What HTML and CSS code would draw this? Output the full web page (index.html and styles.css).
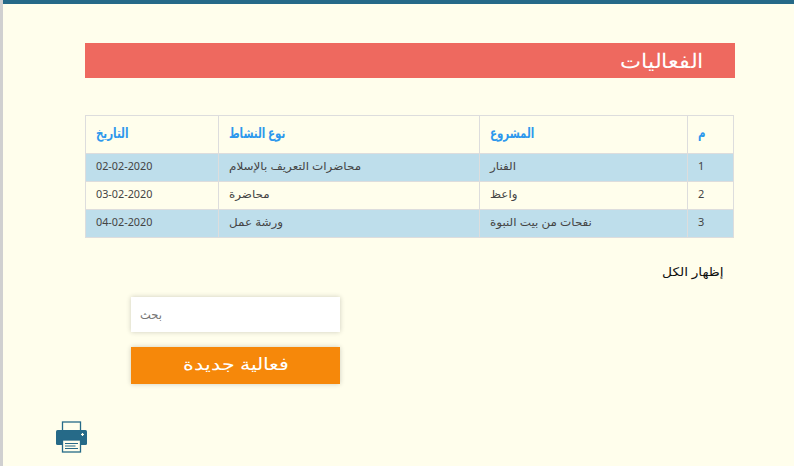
FILE: index.html
```html
<!DOCTYPE html>
<html lang="ar" dir="rtl">
<head>
<meta charset="utf-8">
<title>الفعاليات</title>
<link rel="stylesheet" href="styles.css">
</head>
<body>
<main class="page">
  <h1 class="title"><span>الفعاليات</span></h1>
  <table class="events">
    <colgroup><col class="c-num"><col class="c-project"><col class="c-type"><col class="c-date"></colgroup>
    <thead>
      <tr><th><span>م</span></th><th><span>المشروع</span></th><th><span>نوع النشاط</span></th><th><span>التاريخ</span></th></tr>
    </thead>
    <tbody>
      <tr><td>1</td><td><span>الفنار</span></td><td><span>محاضرات التعريف بالإسلام</span></td><td class="date" dir="ltr">02-02-2020</td></tr>
      <tr><td>2</td><td><span>واعظ</span></td><td><span>محاضرة</span></td><td class="date" dir="ltr">03-02-2020</td></tr>
      <tr><td>3</td><td><span>نفحات من بيت النبوة</span></td><td><span>ورشة عمل</span></td><td class="date" dir="ltr">04-02-2020</td></tr>
    </tbody>
  </table>
  <a class="show-all"><span>إظهار الكل</span></a>
  <div class="actions">
    <input class="search" type="text" placeholder="بحث">
    <button class="new-event"><span>فعالية جديدة</span></button>
  </div>
  <svg class="printer" width="32" height="32" viewBox="0 0 32 32">
    <rect x="6.500" y="1" width="18" height="12" fill="#fffeec" stroke="#266a88" stroke-width="1.300"/>
    <path d="M1.500 9h28q1.500 0 1.500 1.500v12q0 1.500-1.500 1.500h-28Q0 24 0 22.500v-12Q0 9 1.500 9z" fill="#266a88"/>
    <rect x="6.500" y="19" width="18" height="12" fill="#fffeec" stroke="#266a88" stroke-width="1.300"/>
    <path d="M9 22.500h13M9 25h10.500M9 27.500h13" stroke="#266a88" stroke-width="1.100"/>
    <path d="M26.500 12v3M25 13.500h3" stroke="#fffeec" stroke-width="1.200"/>
  </svg>
</main>
</body>
</html>
```
FILE: styles.css
```css
* { box-sizing: border-box; }
html, body { height: 100%; }
body {
  margin: 0;
  overflow: hidden;
  background: #fffeec;
  font-family: "Noto Sans", "DejaVu Sans", sans-serif;
}
.page {
  display: flex;
  flex-direction: column;
  height: 466px;
  padding: 39px 59px 0 82px;
  border-top: 4px solid #266a88;
  margin-left: 3px;
  box-shadow: -3px 0 0 #d0d0d0;
}
.title {
  width: 650px;
  height: 35px;
  margin: 0;
  padding-right: 31px;
  background: #ee695f;
  color: #fff;
  font-size: 20px;
  font-weight: 300;
  line-height: 35px;
}
.title span, .show-all span, .new-event span, .events span { display: inline-block; }
.title span { transform: scaleX(1.12); transform-origin: right; }
.events {
  width: 649px;
  margin: 37px 1px 0 0;
  border-collapse: collapse;
  table-layout: fixed;
  font-size: 11px;
  color: #444;
}
.c-num { width: 46px; }
.c-project { width: 208px; }
.c-type { width: 261px; }
.c-date { width: 133px; }
.events th, .events td {
  height: 28px;
  padding: 0 10px 4px;
  border: 1px solid #ddd;
  text-align: left;
  line-height: 16px;
  white-space: nowrap;
}
.events td span { transform: scaleX(1.085); transform-origin: left; }
.events .date { font-size: 10.800px; }
.events th {
  height: 38px;
  color: #2d98ed;
  font-size: 14px;
}
.events th span { transform: scaleX(.73); transform-origin: left; }
.events tbody tr:nth-child(odd) { background: #bedeeb; }
.show-all {
  margin: 24px 11px 0 0;
  height: 20px;
  line-height: 20px;
  font-size: 12px;
  color: #111;
}
.show-all span { transform: scaleX(1.15); transform-origin: right; }
.actions {
  display: flex;
  flex-direction: column;
  gap: 15px;
  align-self: flex-end;
  width: 209px;
  margin: 15px 0 0 46px;
}
.search, .new-event {
  width: 100%;
  border: 0;
  border-radius: 0;
  box-shadow: 0 0 5px rgba(0, 0, 0, .2);
  font-family: inherit;
}
.search {
  height: 35px;
  padding: 0 9px;
  background: #fff;
  font-size: 11.500px;
  text-align: left;
}
.search::placeholder { color: #757575; }
.new-event {
  height: 37px;
  padding: 0 0 5px;
  background: #f6880a;
  color: #fff;
  font-size: 17px;
  font-weight: 300;
}
.new-event span { transform: scaleX(1.210); }
.printer {
  align-self: flex-end;
  margin-top: 37px;
  margin-left: -29px;
}
```
